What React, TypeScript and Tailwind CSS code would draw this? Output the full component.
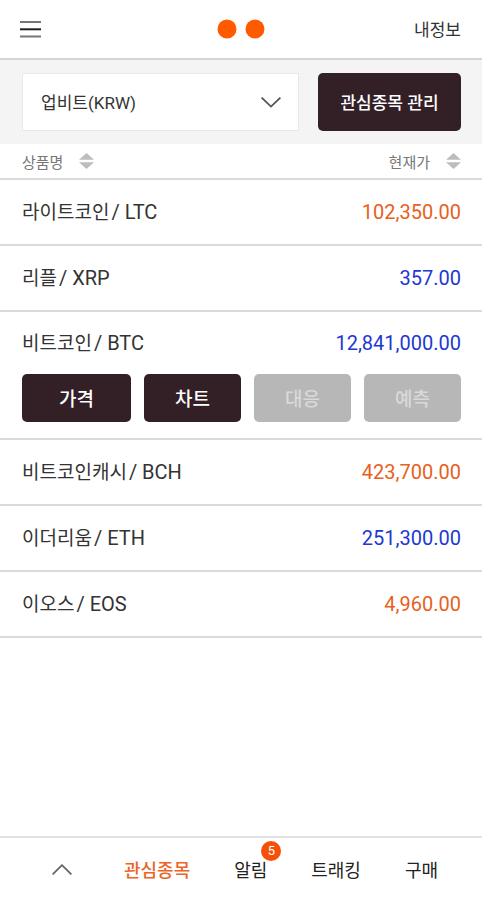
"use client";

import { useState } from "react";
import clsx from "clsx";

const coins = [
  { name: "라이트코인", symbol: "LTC", price: "102,350.00", up: true },
  { name: "리플", symbol: "XRP", price: "357.00", up: false },
  { name: "비트코인", symbol: "BTC", price: "12,841,000.00", up: false },
  { name: "비트코인캐시", symbol: "BCH", price: "423,700.00", up: true },
  { name: "이더리움", symbol: "ETH", price: "251,300.00", up: false },
  { name: "이오스", symbol: "EOS", price: "4,960.00", up: true },
];

const actions = [
  { label: "가격", enabled: true, size: "flex-[9]" },
  { label: "차트", enabled: true, size: "flex-[8]" },
  { label: "대응", enabled: false, size: "flex-[8]" },
  { label: "예측", enabled: false, size: "flex-[8]" },
];

const tabs = [
  { label: "관심종목", active: true },
  { label: "알림", badge: 5 },
  { label: "트래킹" },
  { label: "구매" },
];

function SortIcon() {
  return (
    <svg width="15" height="16" viewBox="0 0 15 16" fill="#bdbdbd" aria-hidden="true">
      <path d="M7.5 0 15 6.8H0z" />
      <path d="M7.5 16 0 9.2h15z" />
    </svg>
  );
}

function Header() {
  return (
    <header className="flex h-15 items-center border-b-2 border-[#d6d6d6] pr-[21px] pl-5">
      <div className="flex flex-1">
        <button type="button" aria-label="메뉴">
          <svg width="21" height="18" viewBox="0 0 21 18" fill="none" strokeWidth="2">
            <path d="M0 2h21M0 16.5h21" stroke="#777" />
            <path d="M0 9.3h21" stroke="#222" />
          </svg>
        </button>
      </div>
      <svg width="48" height="20" viewBox="0 0 48 20" fill="#ff5a00" aria-hidden="true">
        <circle cx="10" cy="10" r="9.5" />
        <circle cx="38" cy="10" r="9.5" />
      </svg>
      <div className="flex flex-1 justify-end">
        <a href="#me" className="pt-1 text-[17px] text-[#333]">
          내정보
        </a>
      </div>
    </header>
  );
}

function FilterBar() {
  return (
    <div className="flex gap-[19px] bg-[#f4f4f4] py-[13px] pr-[21px] pl-[22px]">
      <div className="relative flex-1">
        <select
          aria-label="거래소"
          className="h-[58px] w-full appearance-none border border-[#e8e8e8] bg-white pt-1 pr-12 pl-[18px] text-[17px] text-[#333]"
        >
          <option>업비트(KRW)</option>
        </select>
        <svg
          className="pointer-events-none absolute top-6 right-[18px]"
          width="20"
          height="11"
          viewBox="0 0 20 11"
          fill="none"
          stroke="#555"
          strokeWidth="1.8"
          aria-hidden="true"
        >
          <path d="M.6.6 10 9.6 19.4.6" />
        </svg>
      </div>
      <button type="button" className="h-[58px] w-[143px] rounded-[5px] bg-[#332027] pt-1 text-[17px] font-medium text-white">
        관심종목 관리
      </button>
    </div>
  );
}

function CoinTable() {
  const [selected, setSelected] = useState("BTC");

  return (
    <table className="w-full">
      <thead>
        <tr className="h-[35px] border-b-2 border-[#dadada] text-[15px] text-[#777]">
          <th className="p-0 pl-[22px] text-left font-normal">
            <button type="button" className="flex items-center gap-4">
              <span className="pt-1">상품명</span>
              <SortIcon />
            </button>
          </th>
          <th className="p-0 pr-[21px] font-normal">
            <button type="button" className="ml-auto flex items-center gap-4">
              <span className="pt-1">현재가</span>
              <SortIcon />
            </button>
          </th>
        </tr>
      </thead>
      {coins.map((coin) => {
        const open = coin.symbol === selected;

        return (
          <tbody key={coin.symbol} className="border-b-2 border-[#dadada]">
            <tr
              className={clsx("cursor-pointer", open ? "h-[63px]" : "h-[66px]")}
              onClick={() => setSelected(coin.symbol)}
            >
              <td className="p-0 pt-0.5 pl-[22px] text-[19px] text-[#333]">
                {coin.name}
                <span className="ml-0.5 text-xl">/ {coin.symbol}</span>
              </td>
              <td className={clsx("p-0 pr-[21px] text-right text-xl", coin.up ? "text-[#e8601c]" : "text-[#1d39d0]")}>
                {coin.price}
              </td>
            </tr>
            {open && (
              <tr className="h-[65px]">
                <td colSpan={2} className="p-0 pr-[21px] pb-4 pl-[22px]">
                  <div className="flex gap-[13px]">
                    {actions.map((action) => (
                      <button
                        key={action.label}
                        type="button"
                        disabled={!action.enabled}
                        className={clsx(
                          "h-12 rounded-[5px] pt-1 text-[19px] font-medium",
                          action.size,
                          action.enabled ? "bg-[#332027] text-white" : "bg-[#b7b7b7] text-[#d9d9d9]"
                        )}
                      >
                        {action.label}
                      </button>
                    ))}
                  </div>
                </td>
              </tr>
            )}
          </tbody>
        );
      })}
    </table>
  );
}

function BottomNav() {
  return (
    <nav className="sticky bottom-0 mt-auto flex h-16 items-center justify-between border-t-2 border-[#e2e2e2] bg-white px-11">
      <button type="button" aria-label="펼치기" className="flex w-9 justify-center">
        <svg width="20" height="11" viewBox="0 0 20 11" fill="none" stroke="#666" strokeWidth="1.8">
          <path d="M.6 10.4 10 1.2l9.4 9.2" />
        </svg>
      </button>
      {tabs.map((tab) => (
        <a
          key={tab.label}
          href="#"
          className={clsx("relative pt-1 text-lg", tab.active ? "font-medium text-[#ec6426]" : "text-[#222]")}
        >
          {tab.label}
          {tab.badge && (
            <span className="absolute -top-3 -right-3.5 flex size-5 items-center justify-center rounded-full bg-[#f4500a] text-[13px] text-white">
              {tab.badge}
            </span>
          )}
        </a>
      ))}
    </nav>
  );
}

export default function App() {
  return (
    <div className="flex min-h-screen flex-col bg-white font-[Roboto,'Noto_Sans_CJK_KR',sans-serif]">
      <Header />
      <FilterBar />
      <CoinTable />
      <BottomNav />
    </div>
  );
}
